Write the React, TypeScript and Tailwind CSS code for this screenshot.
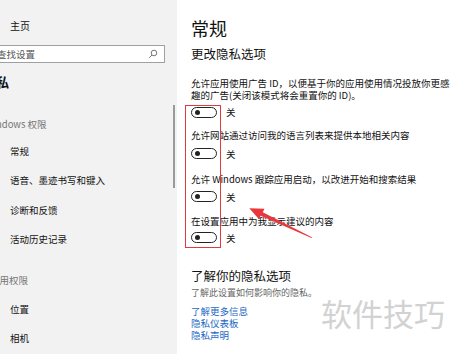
import React from 'react';

const font = { fontFamily: '"Noto Sans CJK SC", "Noto Sans", sans-serif' };

const navGroup1 = ['常规', '语音、墨迹书写和键入', '诊断和反馈', '活动历史记录'];
const navGroup2 = ['位置', '相机'];

function Toggle() {
  return (
    <div className="flex h-[14px] items-center gap-[9px]">
      <div className="flex h-[11px] w-[26px] items-center rounded-full border-[1.5px] border-[#222] pl-[3px]">
        <div className="h-[5px] w-[5px] rounded-full bg-[#222]" />
      </div>
      <span className="text-[9.5px] leading-[12px] text-[#111]">关</span>
    </div>
  );
}

function Sidebar() {
  return (
    <div className="relative flex h-full w-[177px] shrink-0 flex-col overflow-hidden bg-[#f2f2f2] pt-[15px] text-[9.5px] text-[#111]">
      <div className="flex h-[20px] items-center pl-[10px] text-[10px]">主页</div>

      <div className="-ml-[12px] mt-[10px] flex h-[18px] w-[177px] items-center justify-between border border-[#a0a0a0] bg-white pl-[8px] pr-[6px]">
        <span className="text-[9.5px] text-[#555]">查找设置</span>
        <svg width="10" height="10" viewBox="0 0 10 10" fill="none" stroke="#666" strokeWidth="0.9">
          <circle cx="6" cy="4" r="2.8" />
          <line x1="4" y1="6" x2="1.2" y2="8.8" />
        </svg>
      </div>

      <div className="-ml-[17px] mt-[9px] flex h-[20px] items-center text-[13px] font-bold">隐私</div>

      <div className="-ml-[15px] mt-[22px] flex h-[20px] items-center text-[9.5px] text-[#767676]">Windows 权限</div>

      <div className="mt-[2.25px] flex flex-col">
        {navGroup1.map((item) => (
          <div key={item} className="flex h-[29.5px] items-center pl-[10px]">
            {item}
          </div>
        ))}
      </div>

      <div className="-ml-[10px] mt-[15.75px] flex h-[20px] items-center text-[#767676]">应用权限</div>

      <div className="mt-[4.5px] flex flex-col">
        {navGroup2.map((item) => (
          <div key={item} className="flex h-[29px] items-center pl-[10px]">
            {item}
          </div>
        ))}
      </div>

      <div className="absolute left-[173px] top-[105px] h-[83px] w-[2px] bg-[#9a9a9a]" />
    </div>
  );
}

function Content() {
  return (
    <div className="relative flex h-full flex-1 flex-col overflow-hidden bg-white pl-[14px] pt-[16px] text-[#111]">
      <div className="flex h-[24px] items-center text-[18px]">常规</div>
      <div className="mt-[6px] flex h-[16px] items-center text-[12.5px]">更改隐私选项</div>

      <div className="mt-[15px] whitespace-nowrap text-[9.5px] leading-[12px]">
        <div>允许应用使用广告 ID，以便基于你的应用使用情况投放你更感兴</div>
        <div>趣的广告(关闭该模式将会重置你的 ID)。</div>
      </div>
      <div className="mt-[4px]">
        <Toggle />
      </div>

      <div className="mt-[10px] whitespace-nowrap text-[9.5px] leading-[12px]">允许网站通过访问我的语言列表来提供本地相关内容</div>
      <div className="mt-[5.5px]">
        <Toggle />
      </div>

      <div className="mt-[12px] whitespace-nowrap text-[9.5px] leading-[12px]">允许 Windows 跟踪应用启动，以改进开始和搜索结果</div>
      <div className="mt-[5px]">
        <Toggle />
      </div>

      <div className="mt-[11px] whitespace-nowrap text-[9.5px] leading-[12px]">在设置应用中为我显示建议的内容</div>
      <div className="mt-[4px]">
        <Toggle />
      </div>

      <div className="mt-[24px] flex h-[16px] items-center text-[12.5px]">了解你的隐私选项</div>
      <div className="mt-[2.5px] text-[9px] leading-[12px] text-[#666]">了解此设置如何影响你的隐私。</div>
      <div className="mt-[5.5px] flex flex-col text-[9.5px] leading-[12px] text-[#1a67c4]">
        <span>了解更多信息</span>
        <span>隐私仪表板</span>
        <span>隐私声明</span>
      </div>

      <div className="absolute left-[144px] top-[294px] text-[31px] leading-[38px] text-[#d2d2d2]">软件技巧</div>
    </div>
  );
}

export default function App() {
  return (
    <div className="relative flex h-[354px] w-[450px] overflow-hidden" style={font}>
      <Sidebar />
      <Content />

      <div className="absolute left-[185px] top-[105px] h-[143px] w-[36px] border-[1.5px] border-[#e0393e]" />

      <svg className="pointer-events-none absolute left-0 top-0" width="450" height="354">
        <polygon
          points="249.3,208.3 264.5,208.8 262.8,212.3 311.9,237.2 311.5,238.1 260.6,215.8 259.0,219.2"
          fill="#e8383d"
        />
      </svg>
    </div>
  );
}
